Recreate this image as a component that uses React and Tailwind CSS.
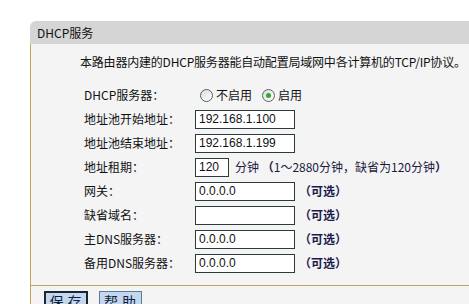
import React from 'react';

const font = { fontFamily: '"Noto Sans CJK SC", "Liberation Sans", sans-serif' };

const Field = ({ value = '', width = 'w-[100px]' }) => (
  <div
    className={`${width} h-[19px] bg-white border border-[#2b3b3b] pl-[3px] flex items-center text-[12px] text-[#111] shrink-0`}
    style={{ fontFamily: '"Liberation Sans", sans-serif' }}
  >
    {value}
  </div>
);

const Radio = ({ checked }) => (
  <span className="w-[13px] h-[13px] rounded-full border border-[#55606c] bg-gradient-to-br from-[#dcdcd8] to-white flex items-center justify-center shrink-0">
    {checked && <span className="w-[5px] h-[5px] rounded-full bg-[#2fa82f]" />}
  </span>
);

const Hint = ({ children }) => (
  <span className="ml-[4px] text-[12px] text-[#1b1b50] font-semibold">{children}</span>
);

const Row = ({ label, children }) => (
  <div className="h-[24px] flex items-center pl-[53px]">
    <div className="w-[111px] text-[12px] text-[#111] shrink-0">{label}</div>
    <div className="flex items-center">{children}</div>
  </div>
);

const App = () => {
  return (
    <div className="w-[469px] h-[304px] bg-white overflow-hidden pt-[21px] pl-[30px]" style={font}>
      <div className="h-[23px] bg-[#d5d5d5] rounded-tl-[6px] pl-[7px] flex items-center text-[12px] text-[#111]">
        DHCP服务
      </div>
      <div className="border-l border-[#c9a15e] bg-[#f4f4f4]">
        <div className="border-b border-[#c9a15e] pt-[10px] pb-[10px]">
          <p className="pl-[49px] h-[16px] leading-[16px] text-[12px] text-[#111] whitespace-nowrap tracking-[-0.2px]">
            本路由器内建的DHCP服务器能自动配置局域网中各计算机的TCP/IP协议。
          </p>
          <div className="mt-[13px]">
            <Row label="DHCP服务器：">
              <label className="flex items-center gap-[3px] text-[12px] text-[#111] ml-[5px]">
                <Radio /> 不启用
              </label>
              <label className="flex items-center gap-[3px] text-[12px] text-[#111] ml-[10px]">
                <Radio checked /> 启用
              </label>
            </Row>
            <Row label="地址池开始地址：">
              <Field value="192.168.1.100" />
            </Row>
            <Row label="地址池结束地址：">
              <Field value="192.168.1.199" />
            </Row>
            <Row label="地址租期：">
              <Field value="120" width="w-[34px]" />
              <span className="ml-[6px] text-[12px] text-[#1b1b40]">
                分钟 <span className="font-semibold">（</span>1～2880分钟，缺省为120分钟<span className="font-semibold">）</span>
              </span>
            </Row>
            <Row label="网关：">
              <Field value="0.0.0.0" />
              <Hint>（可选）</Hint>
            </Row>
            <Row label="缺省域名：">
              <Field />
              <Hint>（可选）</Hint>
            </Row>
            <Row label="主DNS服务器：">
              <Field value="0.0.0.0" />
              <Hint>（可选）</Hint>
            </Row>
            <Row label="备用DNS服务器：">
              <Field value="0.0.0.0" />
              <Hint>（可选）</Hint>
            </Row>
          </div>
        </div>
        <div className="flex items-start gap-[11px] pl-[13px] pt-[5px] h-[30px]">
          <button className="h-[20px] w-[44px] border-2 border-[#1a2634] bg-[#c3d7ee] text-[14px] leading-[14px] text-[#10203a] tracking-[4px] pl-[3px]">
            保存
          </button>
          <button className="h-[20px] w-[43px] border border-[#5d7a98] bg-[#c3d7ee] text-[14px] leading-[14px] text-[#10203a] tracking-[4px] pl-[3px]">
            帮助
          </button>
        </div>
      </div>
    </div>
  );
};

export default App;
